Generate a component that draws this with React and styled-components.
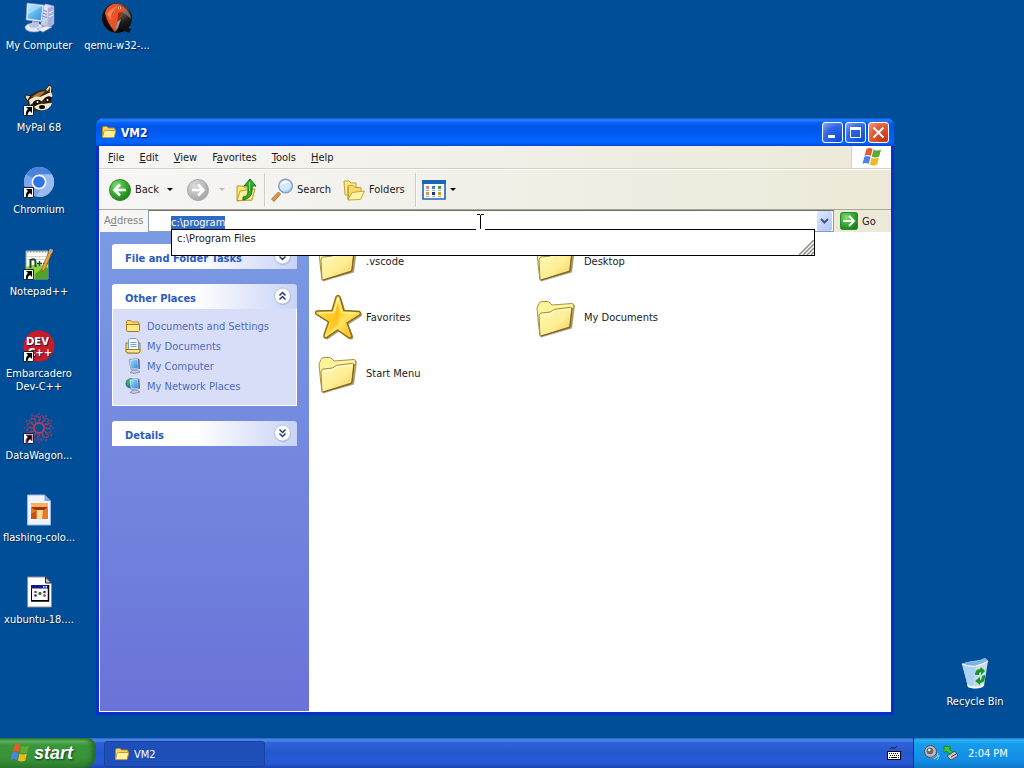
import React, { useEffect, useRef } from 'react';
import styled, { createGlobalStyle } from 'styled-components';

const GlobalStyle = createGlobalStyle`
  * {
    box-sizing: border-box;
  }
  body {
    margin: 0;
    overflow: hidden;
  }
  body, button, input {
    font-family: 'DejaVu Sans Condensed', Roboto, sans-serif;
    font-size: 11px;
    line-height: 13px;
  }
  button {
    margin: 0;
    padding: 0;
    border: 0;
    background: none;
    color: inherit;
  }
  svg {
    display: block;
    flex: none;
  }
`;

/* ---------- desktop ---------- */

const Screen = styled.div`
  display: flex;
  flex-direction: column;
  height: 100vh;
  background: #004e98;
`;

const Desktop = styled.main`
  position: relative;
  flex: 1;
  min-height: 0;
`;

const IconGrid = styled.div`
  display: grid;
  grid-auto-flow: column;
  grid-template-rows: repeat(8, 82px);
  grid-auto-columns: 76px;
  column-gap: 2px;
  padding-left: 1px;
`;

const Shortcut = styled.button`
  display: flex;
  flex-direction: column;
  align-items: center;
  gap: 5px;
  width: 76px;
  padding-top: 2px;
  color: #fff;
  text-shadow: 1px 1px 1px #00274e;
  white-space: pre;
`;

const BinCorner = styled.div`
  position: absolute;
  right: 11px;
  bottom: 30px;
`;

/* ---------- window ---------- */

const Window = styled.section`
  position: absolute;
  top: 118px;
  left: 96px;
  right: 130px;
  bottom: 23px;
  display: flex;
  flex-direction: column;
  border: 3px solid #0a2fd0;
  border-top: 0;
  border-radius: 7px 7px 0 0;
  background: #fff;
  color: #1a1a1a;
`;

const TitleBar = styled.header`
  display: flex;
  align-items: center;
  height: 28px;
  margin: 0 -3px;
  padding: 0 5px;
  border-radius: 7px 7px 0 0;
  background: linear-gradient(#0a4fd8 0, #2a80fb 2px, #0460f4 5px, #0055e5 9px, #005cf6 16px, #0066ff 24px, #0048d8 28px);
`;

const TitleText = styled.h1`
  flex: 1;
  margin: 0;
  padding: 2px 0 0 4px;
  color: #fff;
  font-size: 12px;
  line-height: 16px;
  text-shadow: 1px 1px 1px #0a1883;
`;

const Controls = styled.div`
  display: flex;
  gap: 2px;
`;

const ControlButton = styled.button`
  display: grid;
  place-items: center;
  width: 21px;
  height: 21px;
  border: 1px solid #fff;
  border-radius: 3px;
  background: ${({ $close }) =>
    $close
      ? 'radial-gradient(circle at 85% 90%, #c9340b, #e35a36 60%, #f0a18b)'
      : 'radial-gradient(circle at 85% 90%, #0b50d8, #2e66e4 60%, #8fadf4)'};
`;

const MenuBar = styled.nav`
  display: flex;
  height: 23px;
  border-bottom: 1px solid #d6d2c2;
  background: linear-gradient(90deg, #f6f6f6, #ece9d8);
`;

const MenuList = styled.div`
  display: flex;
  flex: 1;
  align-items: center;
  gap: 15px;
  padding-left: 9px;
  border-right: 1px solid #d6d2c2;
`;

const MenuLogo = styled.div`
  display: grid;
  place-items: center;
  width: 39px;
  background: #fff;
`;

const ToolBar = styled.div`
  display: flex;
  align-items: center;
  height: 41px;
  padding: 0 10px;
  border-top: 1px solid #fff;
  border-bottom: 1px solid #aca899;
  background: linear-gradient(90deg, #f6f6f6, #ece9d8);
`;

const ToolButton = styled.button`
  display: flex;
  align-items: center;
  gap: 4px;
  width: ${({ $width }) => $width}px;
  height: 30px;
`;

const Separator = styled.i`
  width: 2px;
  height: 34px;
  margin: 0 5px;
  border-left: 1px solid #d0cdc0;
  border-right: 1px solid #fff;
`;

const AddressBar = styled.div`
  display: flex;
  height: 22px;
  background: linear-gradient(90deg, #f6f6f6, #ece9d8);
`;

const AddressLabel = styled.label`
  width: 49px;
  padding-left: 5px;
  color: #858379;
  line-height: 22px;
`;

const AddressBox = styled.div`
  position: relative;
  display: flex;
  flex: 1;
  border: 1px solid #8a9cb8;
  border-top-color: #6f6f6a;
  background: #fff;
`;

const AddressInput = styled.input`
  flex: 1;
  min-width: 0;
  padding: 2px 0 0 22px;
  border: 0;
  outline: 0;
  background: transparent;
  color: #000;
  &::selection {
    background: #316ac5;
    color: #fff;
  }
`;

const DropButton = styled.button`
  display: grid;
  place-items: center;
  width: 15px;
  margin: 0 1px;
  border-radius: 2px;
  background: linear-gradient(135deg, #dfe8fd, #b0c6f5);
`;

const Suggestions = styled.ul`
  position: absolute;
  z-index: 2;
  top: 18px;
  left: 22px;
  right: 18px;
  height: 27px;
  margin: 0;
  padding: 2px 5px;
  border: 1px solid #000;
  background: #fff;
  list-style: none;
`;

const Grip = styled.li`
  position: absolute;
  right: 0;
  bottom: 0;
`;

const TextCursor = styled.div`
  position: absolute;
  z-index: 3;
  top: 3px;
  left: 327px;
`;

const GoButton = styled.button`
  display: flex;
  align-items: center;
  gap: 4px;
  width: 57px;
  padding-left: 6px;
`;

const Body = styled.div`
  display: flex;
  flex: 1;
  min-height: 0;
`;

/* ---------- side pane ---------- */

const Sidebar = styled.aside`
  display: flex;
  flex-direction: column;
  gap: 15px;
  width: 210px;
  padding: 12px;
  border-left: 1px solid #fff;
  border-bottom: 1px solid #fff;
  background: linear-gradient(#7b9ae4, #6a73d8);
`;

const PanelHeader = styled.button`
  display: flex;
  align-items: center;
  justify-content: space-between;
  width: 100%;
  height: 25px;
  padding: 0 5px 0 13px;
  border-radius: 3px 3px 0 0;
  background: linear-gradient(90deg, #fff 45%, #c8d3f7);
  color: #2a5cc0;
  font-weight: bold;
`;

const PanelTitle = styled.span`
  padding-top: 3px;
`;

const PanelBody = styled.div`
  display: flex;
  flex-direction: column;
  padding: 7px 12px 9px;
  border: 1px solid #fff;
  border-top: 0;
  background: #d8def7;
`;

const PlaceLink = styled.a`
  display: flex;
  align-items: center;
  gap: 6px;
  height: 20px;
  color: #4a6cc0;
  text-decoration: none;
`;

const Files = styled.div`
  display: grid;
  flex: 1;
  grid-template-columns: repeat(auto-fill, 218px);
  grid-auto-rows: 56px;
  align-content: start;
  padding: 1px 0 0 5px;
`;

const FileTile = styled.button`
  display: flex;
  align-items: center;
  gap: 4px;
`;

/* ---------- task bar ---------- */

const TaskBar = styled.footer`
  display: flex;
  height: 30px;
  background: linear-gradient(#2a5fc4 0, #4a8cf0 2px, #2f62d8 5px, #2557cf 14px, #2659d6 25px, #1b45ad 30px);
`;

const StartButton = styled.button`
  display: flex;
  align-items: center;
  gap: 4px;
  width: 96px;
  padding-left: 10px;
  border-radius: 0 9px 12px 0;
  background: linear-gradient(#2f7a34 0, #62b063 3px, #3a963c 7px, #389238 20px, #2d7d2f 30px);
  box-shadow: inset -4px 0 4px #246b2a;
  color: #fff;
  font: italic bold 18px 'Liberation Sans', sans-serif;
  text-shadow: 1px 1px 2px #143f16;
`;

const TaskButton = styled.button`
  display: flex;
  align-items: center;
  gap: 4px;
  width: 161px;
  height: 26px;
  margin: 3px auto 0 8px;
  padding-left: 9px;
  border: 1px solid #1a42a0;
  border-radius: 3px;
  background: #1e4fb9;
  color: #fff;
`;

const Language = styled.button`
  margin-right: 12px;
`;

const Tray = styled.div`
  display: flex;
  align-items: center;
  gap: 3px;
  width: 111px;
  padding-left: 10px;
  border-left: 1px solid #0b2f80;
  background: linear-gradient(#1a74cc 0, #2cb4f6 2px, #179cec 6px, #118ee6 22px, #0f76c8 30px);
  color: #fff;
`;

const Clock = styled.time`
  margin-left: 6px;
  white-space: nowrap;
`;

/* ---------- drawings ---------- */

const Gradients = () => (
  <svg width="0" height="0" style={{ position: 'absolute' }} aria-hidden="true">
    <defs>
      <linearGradient id="folder" x1="0" y1="0" x2="1" y2="1">
        <stop offset="0" stopColor="#fffab8" />
        <stop offset=".55" stopColor="#feee94" />
        <stop offset="1" stopColor="#f0cb55" />
      </linearGradient>
      <linearGradient id="star" x1="0" y1="0" x2="1" y2="1">
        <stop offset="0" stopColor="#fff08a" />
        <stop offset=".45" stopColor="#ffc81c" />
        <stop offset=".6" stopColor="#ffe45e" />
        <stop offset="1" stopColor="#f0a808" />
      </linearGradient>
      <linearGradient id="screen" x1="0" y1="0" x2="1" y2="1">
        <stop offset="0" stopColor="#9ee4fc" />
        <stop offset="1" stopColor="#2b8ce0" />
      </linearGradient>
      <linearGradient id="case" x1="0" y1="0" x2="1" y2="1">
        <stop offset="0" stopColor="#fafbff" />
        <stop offset="1" stopColor="#9aa5d0" />
      </linearGradient>
      <radialGradient id="green" cx=".35" cy=".3" r=".75">
        <stop offset="0" stopColor="#8ae07a" />
        <stop offset=".5" stopColor="#3cb034" />
        <stop offset="1" stopColor="#1d7d1a" />
      </radialGradient>
      <radialGradient id="grey" cx=".35" cy=".3" r=".75">
        <stop offset="0" stopColor="#dcdcdc" />
        <stop offset="1" stopColor="#a4a4a4" />
      </radialGradient>
      <radialGradient id="dark" cx=".6" cy=".25" r=".8">
        <stop offset="0" stopColor="#77706a" />
        <stop offset=".5" stopColor="#201d1b" />
        <stop offset="1" stopColor="#000" />
      </radialGradient>
    </defs>
  </svg>
);

const ShortcutArrow = () => (
  <g>
    <path d="M0.500 21.500h10v10h-10z" fill="#fff" stroke="#222" />
    <path d="M3 23h6v6l-2-2q-2.200 1.200-2.500 4H3q-.6-3.600 2-6z" fill="#000" />
  </g>
);

const ComputerIcon = () => (
  <svg width="32" height="32" viewBox="0 0 32 32">
    <path d="M18 5l5-3 8 2v18l-6 4-7-3z" fill="url(#case)" stroke="#8690bd" strokeWidth=".6" />
    <path d="M25 6l6-2v18l-6 4z" fill="#a9b2da" />
    <path d="M19 8l5 1.500M19 11l5 1.500M19 14l5 1.500" stroke="#7f8abb" />
    <path d="M25.500 11l5-2M25.500 15l5-2" stroke="#e7eafa" />
    <path d="M4 1l17 2-2 17-16-2z" fill="#e8eefc" stroke="#7b8cc8" strokeWidth=".6" />
    <path d="M5.500 2.500l14 1.700-1.800 14-13-1.700z" fill="url(#screen)" />
    <path d="M5.500 2.500l14 1.700-14.500 8z" fill="#c9f2ff" opacity=".45" />
    <path d="M9 19l7 1v4H9z" fill="#b6c0e2" />
    <ellipse cx="11" cy="25.500" rx="9" ry="4.500" fill="#e3e8f8" stroke="#8995c4" strokeWidth=".6" />
    <ellipse cx="11" cy="23.500" rx="5" ry="2.300" fill="#b9c3e6" />
    <path d="M14 27l9-3 6 1-9 5z" fill="#edf0fb" stroke="#99a3cc" strokeWidth=".6" />
  </svg>
);

const QemuIcon = () => (
  <svg width="32" height="32" viewBox="0 0 32 32">
    <circle cx="16" cy="16" r="15" fill="url(#dark)" />
    <path d="M24 24l6 3-2 4-7-3z" fill="#111" />
    <path d="M20 4q9 4 10 13l-8-7z" fill="#8b8580" opacity=".7" />
    <path d="M4 11q1-6 8-9 7-1 10 3l4 3-5 2q-1 6-5 10l-2 10Q6 21 4 11z" fill="#e9532a" />
    <path d="M6 12q4-6 11-8-8 6-7 14z" fill="#ff8552" />
    <path d="M17 11l4-1q-1 6-5 10 1-5 1-9z" fill="#a92a12" />
    <circle cx="18.500" cy="6" r="1.300" fill="#fff" />
    <circle cx="18.500" cy="6" r=".7" fill="#000" />
    <path d="M14 30l2-10 4-3-3 9z" fill="#f4f0ea" opacity=".6" />
  </svg>
);

const RaccoonIcon = () => (
  <svg width="32" height="32" viewBox="0 0 32 32">
    <path d="M21 8l5-7 3 2-1 9z" fill="#e9d9b4" stroke="#2a1a0c" />
    <path d="M24 8l3-5 0 6z" fill="#5a3a1c" />
    <path d="M5 18l-3-5 1-2 7 1z" fill="#e9d9b4" stroke="#2a1a0c" />
    <path d="M4 17q4-9 14-11 7-1 11 5 1 11-6 14-9 4-15 0z" fill="#3b2613" />
    <path d="M9 13q6-6 14-6l-7 6z" fill="#a5783e" />
    <path d="M6 16q6-5 11-3l11-5q2 3 1 5-6-1-10 4-7 0-12 4z" fill="#f4e7c6" />
    <path d="M10 18q5-4 8-1-2 5-8 5zM21 15q3-4 7-2 0 5-4 6z" fill="#160d06" />
    <path d="M11 23q5-4 10-3 4-1 8-1-2 6-8 7-6 1-10-3z" fill="#f4e7c6" />
    <ellipse cx="19" cy="23" rx="3" ry="2" fill="#120b05" />
    <circle cx="14.500" cy="18" r="1" fill="#fff" />
    <circle cx="24.500" cy="16" r="1" fill="#fff" />
    <ShortcutArrow />
  </svg>
);

const ChromiumIcon = () => (
  <svg width="32" height="32" viewBox="0 0 32 32">
    <circle cx="16" cy="16" r="15" fill="#9dbcf3" />
    <path d="M16 16L3 8.500A15 15 0 0 1 29 8.500H16z" fill="#4a83dc" />
    <path d="M16 16L3 8.500a15 15 0 0 0 10 22.200l6-9z" fill="#7ba5ec" />
    <path d="M22 20l-7 11A15 15 0 0 0 29 8.500H17z" fill="#9bbaf0" />
    <circle cx="16" cy="16" r="7.500" fill="#f4f8ff" />
    <circle cx="16" cy="16" r="5.800" fill="#2e74e4" />
    <ShortcutArrow />
  </svg>
);

const NotepadIcon = () => (
  <svg width="32" height="32" viewBox="0 0 32 32">
    <path d="M3 3h22v28H3z" fill="#fdfdf8" stroke="#9aa58a" />
    <path d="M3 19q10-5 22 0v12H3z" fill="#8ed13f" />
    <path d="M12 26q7-7 13-6v11H12z" fill="#4fa326" />
    <path d="M4 3.500h20" stroke="#8b99b2" strokeWidth="2" strokeDasharray="1.500 1.500" />
    <path d="M4 8.500h19M4 11.500h19" stroke="#cfd5dd" />
    <path d="M7.500 11v9M7.500 12q5-2 5 2v5" stroke="#1d4a20" strokeWidth="2" fill="none" />
    <path d="M14 15.500h5M16.500 13v5M20 15.500h5M22.500 13v5" stroke="#1d4a20" strokeWidth="1.400" fill="none" />
    <path d="M27 1l3 1-8 19-3 3 0-4z" fill="#eba53a" stroke="#8a5413" strokeWidth=".7" />
    <path d="M27 1l3 1-1 3-3-1z" fill="#b9a9a0" />
    <ShortcutArrow />
  </svg>
);

const LogoText = styled.text`
  fill: #fff;
  font: bold 10px 'DejaVu Sans', sans-serif;
`;

const DevIcon = () => (
  <svg width="32" height="32" viewBox="0 0 32 32">
    <circle cx="16" cy="16" r="15.500" fill="#cc1a26" />
    <LogoText x="3" y="15">DEV</LogoText>
    <LogoText x="5" y="26">C++</LogoText>
    <ShortcutArrow />
  </svg>
);

const DataIcon = () => (
  <svg width="32" height="32" viewBox="0 0 32 32" fill="none" stroke="#97406c">
    {[0, 30, 60, 90, 120, 150, 180, 210, 240, 270, 300, 330].map((angle) => (
      <g key={angle} transform={`rotate(${angle} 16 16)`} opacity=".75">
        <path d="M16 11V5l-3-2M16 6l3-3M13 11l-1-5M15 9l3-2" />
        <circle cx="16" cy="2" r=".7" />
        <circle cx="20" cy="5" r=".6" />
      </g>
    ))}
    <circle cx="16" cy="16" r="5" stroke="#b04058" strokeWidth="2" />
    <ShortcutArrow />
  </svg>
);

const ImageFileIcon = () => (
  <svg width="32" height="32" viewBox="0 0 32 32">
    <path d="M4.500 1h17l6 6v24h-23z" fill="#eef4ff" stroke="#9db8e6" />
    <path d="M21.500 1l6 6h-6z" fill="#7ea6ea" />
    <path d="M8 9h17v16H8z" fill="#e87a22" />
    <path d="M8 9h17v5H8z" fill="#f6b15c" />
    <path d="M8 13h17l-4 3H12z" fill="#a3300f" />
    <path d="M14 16h6l-1 9h-5z" fill="#f5d9a0" />
    <path d="M8 20l5-3v8H8z" fill="#c1521a" />
  </svg>
);

const BatchFileIcon = () => (
  <svg width="32" height="32" viewBox="0 0 32 32">
    <path d="M4.500 1h18l6 6v24h-24z" fill="#fff" stroke="#8c8c8c" />
    <path d="M22.500 1v6h6z" fill="#c9c9c9" stroke="#222" />
    <path d="M8.500 9.500h17v15h-17z" fill="#fff" stroke="#000" />
    <path d="M8 9h18v3.500H8z" fill="#101c8c" />
    <path d="M20 10h1.500v1.500H20zM22.500 10H24v1.500h-1.500z" fill="#fff" />
    <circle cx="12.500" cy="16" r="1.300" fill="#d22" />
    <circle cx="12.500" cy="19.500" r="1.300" fill="#22a" />
    <circle cx="17" cy="17.500" r="1.700" fill="#158a2a" />
    <circle cx="21.500" cy="16" r="1.300" fill="#22a" />
    <circle cx="21.500" cy="19.500" r="1.300" fill="#c22" />
    <path d="M25.500 9v16H8" fill="none" stroke="#000" strokeWidth="1.500" />
  </svg>
);

const BinIcon = () => (
  <svg width="32" height="32" viewBox="0 0 32 32">
    <path d="M3 6l5-2 13-2 5-2 3 3-4 25q-7 4-16 1z" fill="#d5e9f8" opacity=".92" />
    <path d="M3 6q8 3 14 2 8-2 12-5l-3-3-7 3q-9 1-11 1z" fill="#7bb5e4" />
    <path d="M3 6q8 3 14 2l-3 21q-3 1-5 0z" fill="#a9d0f2" opacity=".8" />
    <path d="M3 6q8 3 14 2 8-2 12-5" fill="none" stroke="#fff" strokeWidth="1.200" />
    <path d="M8 26q8 5 17 0l-1 3q-8 3-15 0z" fill="#f4faff" />
    <path d="M16 17q0-6 5-6l1-2 4 4-4 4v-3q-2 0-2 3z" fill="#1f9422" />
    <path d="M26 17q1 7-5 8v2l-5-4 5-4v3q2 0 2-4z" fill="#1f9422" />
  </svg>
);

const FolderIcon = () => (
  <svg width="48" height="48" viewBox="0 0 48 48">
    <path d="M9 44.500l31-9 3-23-2-1-5 22-28 9z" fill="#6f5d2c" opacity=".55" />
    <path d="M5 15l2-4.500Q8 8.500 10 8.500h5q2 0 3 1.500l2 2 20-1.500q2 .3 1.800 2.500L39 34 8 43Q6 28 5 15z" fill="#fdf49c" stroke="#a8924a" />
    <path d="M7 23q0-2.500 2-3l8-.8q2-.2 3.500-1.700T25 16l13.500-1.700q1.500 0 1.500 1.700L38 33q-.2 1.300-1.500 1.700L9.500 43Q8 43.200 8 42z" fill="url(#folder)" stroke="#a58c3c" />
    <path d="M8.500 22.500l10-1.300 5-3.200 14.500-2" stroke="#fffde0" fill="none" />
    <path d="M9 43l27.500-8.300Q38 34 38 33l2-18" fill="none" stroke="#7b6426" strokeWidth="1.300" />
  </svg>
);

const SmallFolder = ({ open }) => (
  <svg width="16" height="16" viewBox="0 0 16 16">
    <path d="M1.500 13V4q0-1.500 1.500-1.500h3L7.500 4H13q1 0 1 1v3" fill="#f8d768" stroke="#b78a20" />
    {open ? (
      <path d="M1.500 13.500L3 7.500q.3-1 1.300-1h10.400l-1.300 6q-.2 1-1.200 1z" fill="#fff3a6" stroke="#c79a30" />
    ) : (
      <path d="M1.500 6.500h13v6q0 1-1 1h-11q-1 0-1-1z" fill="#fde88c" stroke="#a97a1c" />
    )}
  </svg>
);

const STAR =
  'M22 4q2-3 4 0l4 13.500 15.500 1q2 1.500 0 3.500L33 30l5 13q-.5 2.500-3 2L23.500 37 12 45q-2.500 0-2-3l4.500-13L2 21q-1-2.500 1-3l15-.5z';

const StarIcon = () => (
  <svg width="48" height="48" viewBox="0 0 48 48">
    <path d={STAR} transform="translate(1.500 1.500)" fill="#5c4a1c" opacity=".55" />
    <path d={STAR} fill="url(#star)" stroke="#8a6c18" strokeWidth="1.400" />
    <path d="M24 5l3.500 14.500 14 1M24 5l-4 14.500-15 .5" fill="none" stroke="#fff7b5" strokeWidth="1.200" />
    <path d="M24 8l-3 13-7 19 11-9z" fill="#ffb10c" opacity=".45" />
  </svg>
);

const WindowsFlag = ({ size }) => (
  <svg width={size} height={size} viewBox="0 0 20 20">
    <path d="M4.500 2q3-2 6 0L8.800 9q-3-2-6.300 0z" fill="#e8582a" />
    <path d="M11.500 2.500q3 2 7.500 0L17.200 9.500q-4 2-7.400 0z" fill="#5dab33" />
    <path d="M2.200 10q3-2 6.300 0l-1.700 7q-3-2-6.300 0z" fill="#4a83e6" />
    <path d="M9.500 10.500q3 2 7.400 0l-1.700 7q-4 2-7.300 0z" fill="#f2b822" />
  </svg>
);

const CircleArrow = ({ back }) => (
  <svg width="22" height="22" viewBox="0 0 22 22">
    <circle cx="11" cy="11" r="10.500" fill={back ? 'url(#green)' : 'url(#grey)'} stroke={back ? '#2d8a28' : '#aaa'} />
    <path
      d={back ? 'M17 11H6M11 5.500L5.500 11l5.500 5.500' : 'M5 11h11M11 5.500l5.500 5.500-5.500 5.500'}
      fill="none"
      stroke="#fff"
      strokeWidth="2.600"
    />
  </svg>
);

const UpIcon = () => (
  <svg width="24" height="24" viewBox="0 0 24 24">
    <path d="M2 8h6l2 2h8l-1 12-15 1z" fill="#fbe77a" stroke="#c09a2b" />
    <path d="M2 22.500L5 13l15-2-3 11z" fill="#fff3a0" stroke="#c09a2b" />
    <path d="M8 19q5 0 5-6V8H9l6-7 6 7h-4v5q0 7-9 9z" fill="#32b02a" stroke="#14721a" />
    <path d="M14.500 4v9" stroke="#8be27c" />
  </svg>
);

const SearchIcon = () => (
  <svg width="22" height="24" viewBox="0 0 22 24">
    <path d="M7.500 14l2 2L3 23.500.500 21z" fill="#e09850" stroke="#9d6128" strokeWidth=".8" />
    <circle cx="14.500" cy="8" r="6.800" fill="#d3ebfc" stroke="#8d9fc4" strokeWidth="1.500" />
    <path d="M9.500 8q1-5 6-5 3 .5 4 2-6-1-10 3z" fill="#fff" />
    <path d="M11 12q6 2 9-4-1 6-5 6-3 0-4-2z" fill="#a5d0f4" />
  </svg>
);

const FoldersIcon = () => (
  <svg width="22" height="24" viewBox="0 0 22 24">
    <path d="M1 3h5l2 2h5v12H2z" fill="#fbe98a" stroke="#c6a136" />
    <path d="M5 7.500h5l2 2h6v5L6 21z" fill="#f7dc6c" stroke="#c6a136" />
    <path d="M5 9v12.500l4-7 12.500-1.500-4 8.500L5 22z" fill="#fff3a4" stroke="#c6a136" />
  </svg>
);

const ViewsIcon = () => (
  <svg width="24" height="20" viewBox="0 0 24 20">
    <path d="M1 1h22v18H1z" fill="#fff" stroke="#1c62b8" strokeWidth="1.600" />
    <path d="M0 0h24v4H0z" fill="#1c62b8" />
    <path d="M4 6h3v3H4z" fill="#d98484" />
    <path d="M10 6h3v3h-3z" fill="#3b88c8" />
    <path d="M16 6h3v3h-3z" fill="#3f9a4a" />
    <path d="M4 12h3v3H4z" fill="#e48b62" />
    <path d="M10 12h3v3h-3z" fill="#1b2f8c" />
    <path d="M16 12h3v3h-3z" fill="#cf9b26" />
    <path d="M4 10.500h3M10 10.500h3M16 10.500h3M4 16.500h3M10 16.500h3M16 16.500h3" stroke="#aaa" />
  </svg>
);

const Caret = ({ color = '#000' }) => (
  <svg width="6" height="3" viewBox="0 0 6 3">
    <path d="M0 0h6L3 3z" fill={color} />
  </svg>
);

const Chevrons = ({ up }) => (
  <svg width="19" height="19" viewBox="0 0 19 19">
    <circle cx="10" cy="10" r="8" fill="#8a9ad0" opacity=".5" />
    <circle cx="9.500" cy="9" r="8" fill="#fff" stroke="#b4bfe2" />
    <path
      d={up ? 'M6.500 8.500l3-3 3 3M6.500 12.500l3-3 3 3' : 'M6.500 5.500l3 3 3-3M6.500 9.500l3 3 3-3'}
      fill="none"
      stroke="#26387a"
      strokeWidth="1.500"
    />
  </svg>
);

const DocumentsIcon = () => (
  <svg width="16" height="16" viewBox="0 0 16 16">
    <path d="M1 5h14v8q0 2-2 2H3q-2 0-2-2z" fill="#f4d36a" stroke="#a07c25" />
    <path d="M5 .5h6l2.500 2.500v9h-10V2z" fill="#f6fbff" stroke="#7d99b8" />
    <path d="M5.500 4.500h6M5.500 6.500h6M5.500 8.500h6" stroke="#6ea3cf" />
    <path d="M1 11.500h14V13q0 2-2 2H3q-2 0-2-2z" fill="#fbe691" stroke="#a07c25" />
  </svg>
);

const SmallComputer = ({ globe }) => (
  <svg width="16" height="16" viewBox="0 0 16 16">
    {globe && <circle cx="5.500" cy="5.500" r="5" fill="#1d7fa8" />}
    {globe && <path d="M2 2q3-3 6-1L6 5 3 8Q0 5 2 2z" fill="#37a84c" />}
    <path d="M4 1.500l9-1 1 10-8 1z" fill="#dfe7fa" stroke="#7a86b8" strokeWidth=".7" />
    <path d="M5 2.500l7.300-.8.7 8-6.500.8z" fill="url(#screen)" />
    <path d="M8 12h4l3 2-6 1.500-4-1z" fill="#c2c9e4" stroke="#737ca8" strokeWidth=".7" />
    <path d="M13 1l1.500.5.500 9-1.500.5z" fill="#5b6699" />
  </svg>
);

const GoIcon = () => (
  <svg width="18" height="18" viewBox="0 0 18 18">
    <rect x=".5" y=".5" width="17" height="17" rx="2" fill="url(#green)" stroke="#2f8a35" />
    <path d="M3 9h10M9 4l5 5-5 5" fill="none" stroke="#fff" strokeWidth="2" />
  </svg>
);

const GripLines = () => (
  <svg width="15" height="15" viewBox="0 0 15 15" stroke="#8c8c82">
    <path d="M0 15L15 0M4 15L15 4M8 15l7-7M12 15l3-3" strokeWidth="1.500" />
  </svg>
);

const Beam = () => (
  <svg width="9" height="16" viewBox="0 0 9 16">
    <path d="M0 14h9v2H0z" fill="#fff" />
    <path d="M1 .5h3M5 .5h3M4.500 1v14" stroke="#000" />
  </svg>
);

const KeyboardIcon = () => (
  <svg width="14" height="14" viewBox="0 0 14 14">
    <path d="M3 3q1-2 3-1t4-2" fill="none" stroke="#081a50" />
    <path d="M0 5h14v9H0z" fill="#000" />
    <path d="M1 6h12v7H1z" fill="#fff" />
    <path d="M2 7.500h10M3 9.500h10" stroke="#000" strokeDasharray="1 1" />
    <path d="M2 11.500h1M4 11.500h6M11 11.500h1" stroke="#000" />
  </svg>
);

const SpeakerIcon = () => (
  <svg width="16" height="16" viewBox="0 0 16 16">
    <circle cx="6.500" cy="6.500" r="6" fill="#b9b9bd" stroke="#4c4f58" />
    <circle cx="6" cy="6" r="3.300" fill="#63666e" />
    <circle cx="5.300" cy="5" r="1.300" fill="#e8e8ea" />
    <path d="M5 12l5 2 2-4" fill="#7d8088" />
    <path d="M10 14q4-1 4-6M13 15q2-2 2-5" fill="none" stroke="#a9d8ff" />
  </svg>
);

const EjectIcon = () => (
  <svg width="16" height="16" viewBox="0 0 16 16">
    <path d="M4 11l8-5 3 5-7 4z" fill="#c9ccd2" stroke="#4c5058" />
    <path d="M8 12l5-3" stroke="#2f333a" />
    <path d="M1 8V1l7 1-2 2 4 3-3 2-4-3z" fill="#3cc43a" stroke="#14761b" strokeWidth=".7" />
  </svg>
);

/* ---------- app ---------- */

const shortcuts = [
  { label: 'My Computer', icon: <ComputerIcon /> },
  { label: 'MyPal 68', icon: <RaccoonIcon /> },
  { label: 'Chromium', icon: <ChromiumIcon /> },
  { label: 'Notepad++', icon: <NotepadIcon /> },
  { label: 'Embarcadero\nDev-C++', icon: <DevIcon /> },
  { label: 'DataWagon...', icon: <DataIcon /> },
  { label: 'flashing-colo...', icon: <ImageFileIcon /> },
  { label: 'xubuntu-18....', icon: <BatchFileIcon /> },
  { label: 'qemu-w32-...', icon: <QemuIcon /> },
];

// [text before the access key, access key, text after it]
const menus = [
  ['', 'F', 'ile'],
  ['', 'E', 'dit'],
  ['', 'V', 'iew'],
  ['F', 'a', 'vorites'],
  ['', 'T', 'ools'],
  ['', 'H', 'elp'],
];

const places = [
  { label: 'Documents and Settings', icon: <SmallFolder /> },
  { label: 'My Documents', icon: <DocumentsIcon /> },
  { label: 'My Computer', icon: <SmallComputer /> },
  { label: 'My Network Places', icon: <SmallComputer globe /> },
];

const files = ['.vscode', 'Desktop', 'Favorites', 'My Documents', 'Start Menu'];

const Address = () => {
  const input = useRef(null);

  useEffect(() => {
    input.current.focus();
    input.current.select();
  }, []);

  return (
    <AddressBar>
      <AddressLabel htmlFor="address">
        A<u>d</u>dress
      </AddressLabel>
      <AddressBox>
        <AddressInput id="address" ref={input} defaultValue="c:\program" autoComplete="off" spellCheck="false" />
        <DropButton aria-label="Show addresses">
          <svg width="9" height="6" viewBox="0 0 9 6">
            <path d="M1 1l3.500 3.500L8 1" fill="none" stroke="#3f5688" strokeWidth="2" />
          </svg>
        </DropButton>
        <Suggestions>
          <li>c:\Program Files</li>
          <Grip aria-hidden="true">
            <GripLines />
          </Grip>
        </Suggestions>
        <TextCursor>
          <Beam />
        </TextCursor>
      </AddressBox>
      <GoButton>
        <GoIcon />
        Go
      </GoButton>
    </AddressBar>
  );
};

const Panel = ({ title, open, children }) => (
  <div>
    <PanelHeader>
      <PanelTitle>{title}</PanelTitle>
      <Chevrons up={open} />
    </PanelHeader>
    {open && <PanelBody>{children}</PanelBody>}
  </div>
);

const Explorer = () => (
  <Window>
    <TitleBar>
      <SmallFolder open />
      <TitleText>VM2</TitleText>
      <Controls>
        <ControlButton aria-label="Minimize">
          <svg width="13" height="13" viewBox="0 0 13 13">
            <path d="M2 9h7v3H2z" fill="#fff" />
          </svg>
        </ControlButton>
        <ControlButton aria-label="Maximize">
          <svg width="13" height="13" viewBox="0 0 13 13">
            <path d="M1.500 2.500h10v9h-10z" fill="none" stroke="#fff" />
            <path d="M1 1h11v3H1z" fill="#fff" />
          </svg>
        </ControlButton>
        <ControlButton $close aria-label="Close">
          <svg width="13" height="13" viewBox="0 0 13 13">
            <path d="M1.500 1.500l10 10M11.500 1.500l-10 10" stroke="#fff" strokeWidth="2" />
          </svg>
        </ControlButton>
      </Controls>
    </TitleBar>
    <MenuBar>
      <MenuList>
        {menus.map(([before, key, after]) => (
          <button key={key}>
            {before}
            <u>{key}</u>
            {after}
          </button>
        ))}
      </MenuList>
      <MenuLogo>
        <WindowsFlag size={20} />
      </MenuLogo>
    </MenuBar>
    <ToolBar>
      <ToolButton $width={58}>
        <CircleArrow back />
        Back
      </ToolButton>
      <ToolButton $width={20} aria-label="Back history">
        <Caret />
      </ToolButton>
      <ToolButton $width={32} aria-label="Forward">
        <CircleArrow />
      </ToolButton>
      <ToolButton $width={16} aria-label="Forward history">
        <Caret color="#bdbab0" />
      </ToolButton>
      <ToolButton $width={24} aria-label="Up">
        <UpIcon />
      </ToolButton>
      <Separator />
      <ToolButton $width={72}>
        <SearchIcon />
        Search
      </ToolButton>
      <ToolButton $width={67}>
        <FoldersIcon />
        Folders
      </ToolButton>
      <Separator />
      <ToolButton $width={36} aria-label="Views">
        <ViewsIcon />
        <Caret />
      </ToolButton>
    </ToolBar>
    <Address />
    <Body>
      <Sidebar>
        <Panel title="File and Folder Tasks" />
        <Panel title="Other Places" open>
          {places.map(({ label, icon }) => (
            <PlaceLink key={label} href="#">
              {icon}
              {label}
            </PlaceLink>
          ))}
        </Panel>
        <Panel title="Details" />
      </Sidebar>
      <Files>
        {files.map((name) => (
          <FileTile key={name}>
            {name === 'Favorites' ? <StarIcon /> : <FolderIcon />}
            {name}
          </FileTile>
        ))}
      </Files>
    </Body>
  </Window>
);

const App = () => (
  <Screen>
    <GlobalStyle />
    <Gradients />
    <Desktop>
      <IconGrid>
        {shortcuts.map(({ label, icon }) => (
          <Shortcut key={label}>
            {icon}
            <span>{label}</span>
          </Shortcut>
        ))}
      </IconGrid>
      <BinCorner>
        <Shortcut>
          <BinIcon />
          Recycle Bin
        </Shortcut>
      </BinCorner>
      <Explorer />
    </Desktop>
    <TaskBar>
      <StartButton>
        <WindowsFlag size={20} />
        start
      </StartButton>
      <TaskButton>
        <SmallFolder open />
        VM2
      </TaskButton>
      <Language aria-label="Keyboard layout">
        <KeyboardIcon />
      </Language>
      <Tray>
        <SpeakerIcon />
        <EjectIcon />
        <Clock>2:04 PM</Clock>
      </Tray>
    </TaskBar>
  </Screen>
);

export default App;
